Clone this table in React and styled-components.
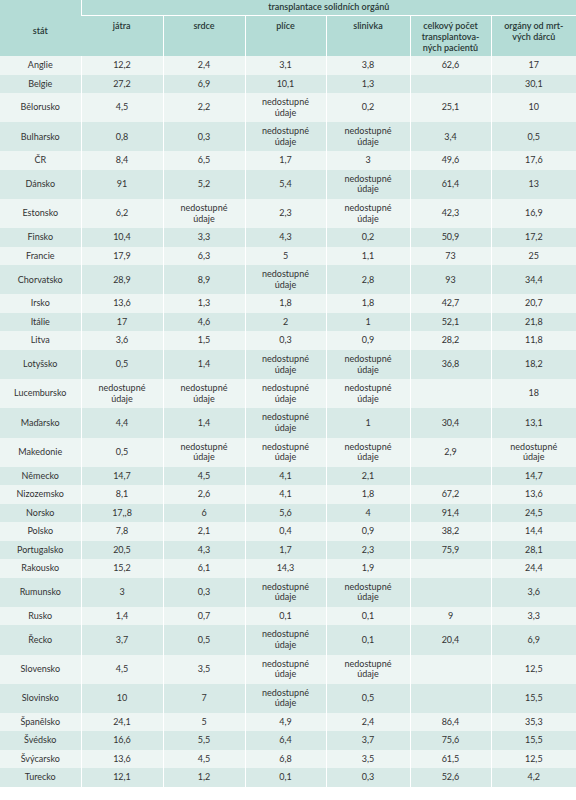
import React from 'react';
import styled, { createGlobalStyle } from 'styled-components';

const GlobalStyle = createGlobalStyle`
  html, body {
    margin: 0;
    padding: 0;
    background: #fff;
  }
  body {
    font-family: Lato, "Open Sans", sans-serif;
  }
`;

const NA = 'nedostupné údaje';

const rows = [
  ['Anglie', '12,2', '2,4', '3,1', '3,8', '62,6', '17'],
  ['Belgie', '27,2', '6,9', '10,1', '1,3', '', '30,1'],
  ['Bělorusko', '4,5', '2,2', NA, '0,2', '25,1', '10'],
  ['Bulharsko', '0,8', '0,3', NA, NA, '3,4', '0,5'],
  ['ČR', '8,4', '6,5', '1,7', '3', '49,6', '17,6'],
  ['Dánsko', '91', '5,2', '5,4', NA, '61,4', '13'],
  ['Estonsko', '6,2', NA, '2,3', NA, '42,3', '16,9'],
  ['Finsko', '10,4', '3,3', '4,3', '0,2', '50,9', '17,2'],
  ['Francie', '17,9', '6,3', '5', '1,1', '73', '25'],
  ['Chorvatsko', '28,9', '8,9', NA, '2,8', '93', '34,4'],
  ['Irsko', '13,6', '1,3', '1,8', '1,8', '42,7', '20,7'],
  ['Itálie', '17', '4,6', '2', '1', '52,1', '21,8'],
  ['Litva', '3,6', '1,5', '0,3', '0,9', '28,2', '11,8'],
  ['Lotyšsko', '0,5', '1,4', NA, NA, '36,8', '18,2'],
  ['Lucembursko', NA, NA, NA, NA, '', '18'],
  ['Maďarsko', '4,4', '1,4', NA, '1', '30,4', '13,1'],
  ['Makedonie', '0,5', NA, NA, NA, '2,9', NA],
  ['Německo', '14,7', '4,5', '4,1', '2,1', '', '14,7'],
  ['Nizozemsko', '8,1', '2,6', '4,1', '1,8', '67,2', '13,6'],
  ['Norsko', '17,,8', '6', '5,6', '4', '91,4', '24,5'],
  ['Polsko', '7,8', '2,1', '0,4', '0,9', '38,2', '14,4'],
  ['Portugalsko', '20,5', '4,3', '1,7', '2,3', '75,9', '28,1'],
  ['Rakousko', '15,2', '6,1', '14,3', '1,9', '', '24,4'],
  ['Rumunsko', '3', '0,3', NA, NA, '', '3,6'],
  ['Rusko', '1,4', '0,7', '0,1', '0,1', '9', '3,3'],
  ['Řecko', '3,7', '0,5', NA, '0,1', '20,4', '6,9'],
  ['Slovensko', '4,5', '3,5', NA, NA, '', '12,5'],
  ['Slovinsko', '10', '7', NA, '0,5', '', '15,5'],
  ['Španělsko', '24,1', '5', '4,9', '2,4', '86,4', '35,3'],
  ['Švédsko', '16,6', '5,5', '6,4', '3,7', '75,6', '15,5'],
  ['Švýcarsko', '13,6', '4,5', '6,8', '3,5', '61,5', '12,5'],
  ['Turecko', '12,1', '1,2', '0,1', '0,3', '52,6', '4,2'],
];

const widths = [81, 82, 82, 81, 84, 81, 85];

const Table = styled.table`
  width: 576px;
  table-layout: fixed;
  border-collapse: collapse;
  font-size: 9px;
  line-height: 11px;
  color: #333;
`;

const HeadRow = styled.tr`
  height: ${p => p.$h}px;
`;

const HeadCell = styled.th`
  background: #b4dcd6;
  color: #273735;
  font-weight: 600;
  font-size: 9px;
  line-height: 11px;
  text-align: center;
  vertical-align: ${p => (p.$middle ? 'middle' : 'top')};
  padding: ${p => (p.$top ? '1px 2px 0' : '4px 2px 0')};
  border-left: 1px solid #fff;
  border-bottom: ${p => (p.$top ? '1px solid #fff' : 'none')};
  &:first-child {
    border-left: none;
  }
`;

const Row = styled.tr`
  height: ${p => (p.$tall ? 29.2 : 18.5)}px;
  background: ${p => (p.$odd ? '#edf5f3' : '#d8eae7')};
`;

const Cell = styled.td`
  font-size: 9px;
  line-height: 10.5px;
  text-align: center;
  vertical-align: middle;
  padding: 0 4px;
  border-left: 1px solid #fff;
  &:first-child {
    border-left: none;
  }
`;

const Multi = ({ text }) =>
  text === NA ? (
    <>
      nedostupné
      <br />
      údaje
    </>
  ) : (
    text
  );

export default function App() {
  return (
    <>
      <GlobalStyle />
      <Table>
        <colgroup>
          {widths.map((w, i) => (
            <col key={i} style={{ width: w }} />
          ))}
        </colgroup>
        <thead>
          <HeadRow $h={15}>
            <HeadCell rowSpan={2} $middle>
              stát
            </HeadCell>
            <HeadCell colSpan={6} $top>
              transplantace solidních orgánů
            </HeadCell>
          </HeadRow>
          <HeadRow $h={41}>
            <HeadCell>játra</HeadCell>
            <HeadCell>srdce</HeadCell>
            <HeadCell>plíce</HeadCell>
            <HeadCell>slinivka</HeadCell>
            <HeadCell>
              celkový počet
              <br />
              transplantova-
              <br />
              ných pacientů
            </HeadCell>
            <HeadCell>
              orgány od mrt-
              <br />
              vých dárců
            </HeadCell>
          </HeadRow>
        </thead>
        <tbody>
          {rows.map((r, i) => (
            <Row key={r[0]} $odd={i % 2 === 0} $tall={r.includes(NA)}>
              {r.map((c, j) => (
                <Cell key={j}>
                  <Multi text={c} />
                </Cell>
              ))}
            </Row>
          ))}
        </tbody>
      </Table>
    </>
  );
}
